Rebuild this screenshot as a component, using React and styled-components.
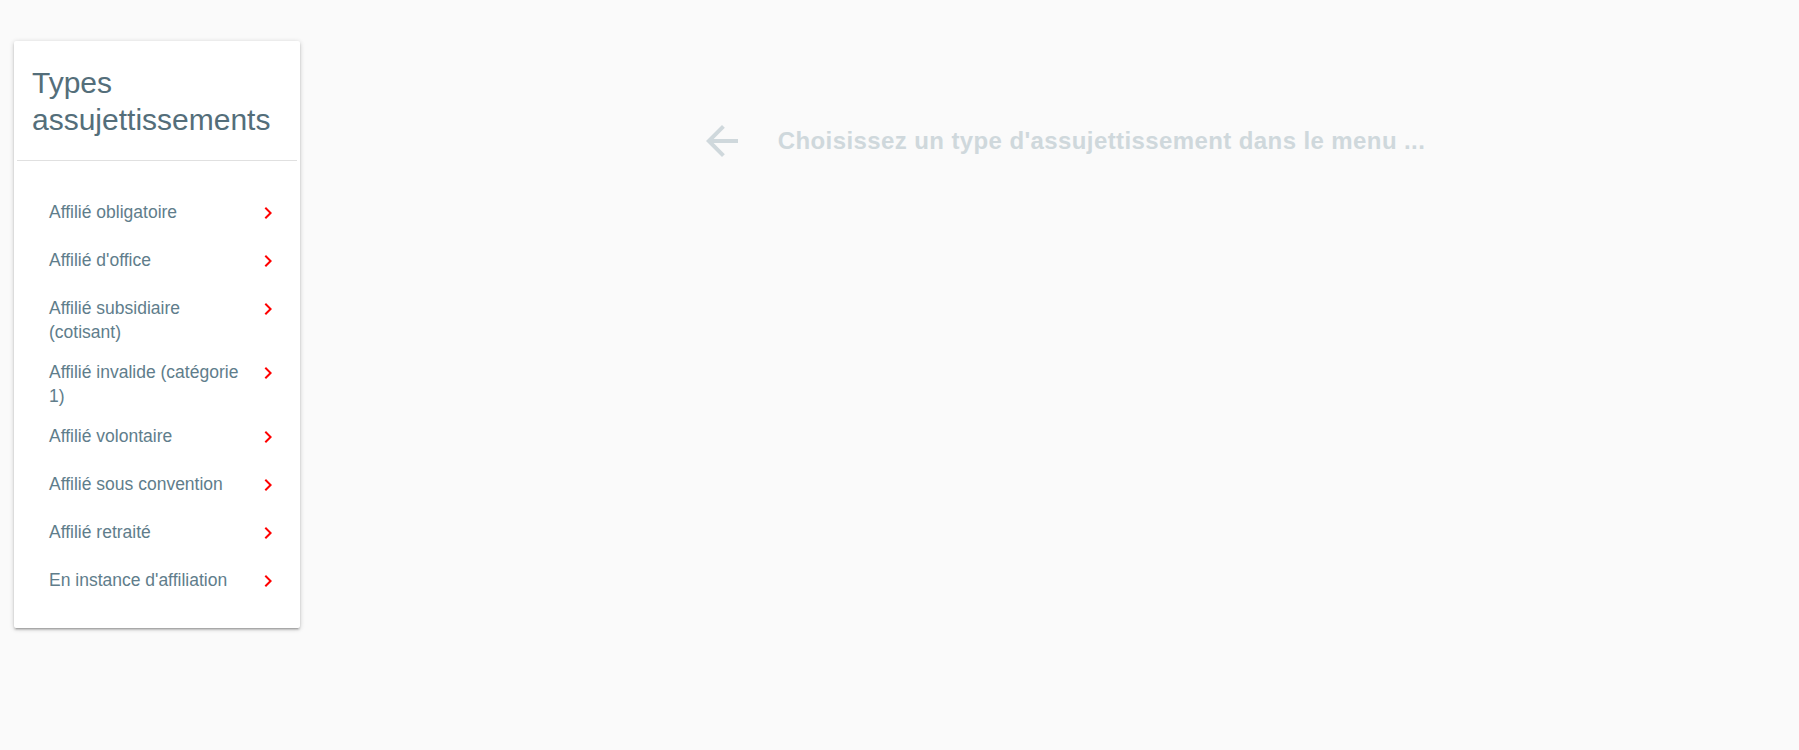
import React from "react";
import styled, { createGlobalStyle } from "styled-components";

const GlobalStyle = createGlobalStyle`
  html, body {
    margin: 0;
    padding: 0;
    background: #fafafa;
    font-family: "Liberation Sans", Arial, sans-serif;
  }
  * { box-sizing: border-box; }
`;

const Page = styled.div`
  display: flex;
  align-items: flex-start;
  padding: 41px 0 0 14px;
  min-height: 750px;
`;

const Card = styled.aside`
  width: 286px;
  flex: 0 0 286px;
  background: #fff;
  border-radius: 2px;
  box-shadow: 0 2px 2px 0 rgba(0, 0, 0, 0.14), 0 3px 1px -2px rgba(0, 0, 0, 0.12),
    0 1px 5px 0 rgba(0, 0, 0, 0.2);
  padding-bottom: 24px;
`;

const CardHeader = styled.div`
  padding: 23px 18px 22px 18px;
`;

const Title = styled.h1`
  margin: 0;
  font-size: 30px;
  line-height: 37px;
  font-weight: 400;
  color: #546e7a;
`;

const Divider = styled.hr`
  margin: 0 3px;
  border: 0;
  border-top: 1px solid #e0e0e0;
  height: 0;
`;

const List = styled.ul`
  list-style: none;
  margin: 0;
  padding: 27px 0 0 0;
`;

const Item = styled.li`
  display: flex;
  align-items: flex-start;
  min-height: 48px;
  padding: 12px 20px 4px 35px;
  cursor: pointer;
`;

const ItemLabel = styled.span`
  flex: 1;
  font-size: 17.5px;
  line-height: 24px;
  color: #607d8b;
`;

const Chevron = styled.svg`
  flex: 0 0 24px;
  width: 24px;
  height: 24px;
  margin: 1px 0 0 4px;
  fill: #ff0000;
`;

const Main = styled.main`
  flex: 1;
  margin-left: 24px;
  padding-top: 76px;
  display: flex;
  justify-content: center;
`;

const Hint = styled.div`
  display: flex;
  align-items: center;
  gap: 32px;
`;

const BackArrow = styled.svg`
  width: 48px;
  height: 48px;
  fill: #cfd8dc;
`;

const HintText = styled.span`
  font-size: 24px;
  font-weight: 700;
  letter-spacing: 0.4px;
  color: #cfd8dc;
  margin-top: -1px;
`;

const items = [
  "Affilié obligatoire",
  "Affilié d'office",
  "Affilié subsidiaire (cotisant)",
  "Affilié invalide (catégorie 1)",
  "Affilié volontaire",
  "Affilié sous convention",
  "Affilié retraité",
  "En instance d'affiliation",
];

export default function App() {
  return (
    <>
      <GlobalStyle />
      <Page>
        <Card>
          <CardHeader>
            <Title>Types assujettissements</Title>
          </CardHeader>
          <Divider />
          <List>
            {items.map((label) => (
              <Item key={label}>
                <ItemLabel>{label}</ItemLabel>
                <Chevron viewBox="0 0 24 24">
                  <path d="M10 6L8.59 7.41 13.17 12l-4.58 4.59L10 18l6-6z" />
                </Chevron>
              </Item>
            ))}
          </List>
        </Card>
        <Main>
          <Hint>
            <BackArrow viewBox="0 0 24 24">
              <path d="M20 11H7.83l5.59-5.59L12 4l-8 8 8 8 1.41-1.41L7.83 13H20v-2z" />
            </BackArrow>
            <HintText>Choisissez un type d'assujettissement dans le menu ...</HintText>
          </Hint>
        </Main>
      </Page>
    </>
  );
}
